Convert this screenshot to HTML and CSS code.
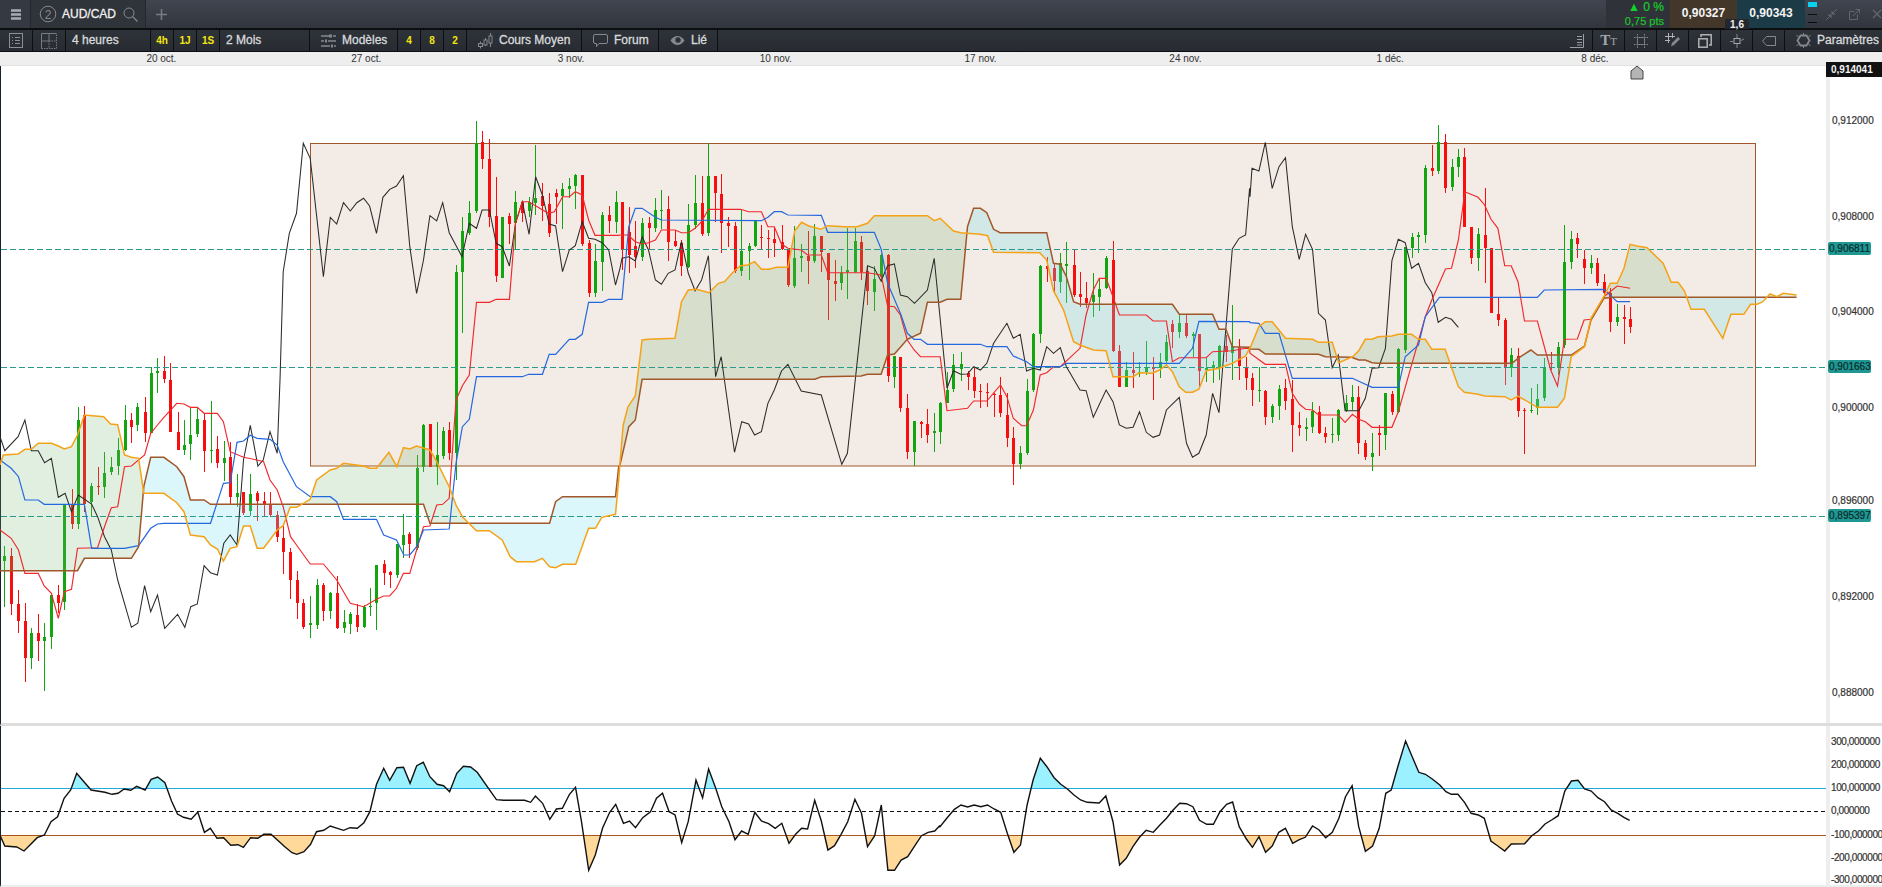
FILE: index.html
```html
<!DOCTYPE html>
<html lang="fr">
<head>
  <meta charset="UTF-8" />
  <title>AUD/CAD</title>
  <link rel="stylesheet" href="styles.css">
</head>
<body>

  <!-- barre du haut -->
  <div class="topbar">
    <div class="menu-cell">
      <svg width="31" height="29" viewBox="0 0 31 29"><path d="M11 10.500h10M11 14.500h10M11 18.500h10" stroke="#a8abb0" stroke-width="2.400"/></svg>
    </div>
    <div class="tab">
      <svg width="18" height="18" viewBox="0 0 18 18"><circle cx="9" cy="9" r="7.800" fill="none" stroke="#85888e"/><text x="9" y="13.500" class="tab-num">2</text></svg>
      <span class="tab-name">AUD/CAD</span>
      <svg width="15" height="15" viewBox="0 0 15 15"><circle cx="6" cy="6" r="5" fill="none" stroke="#85888e"/><path d="M9.500 9.500l5 5" stroke="#85888e" stroke-width="1.300"/></svg>
    </div>
    <div class="plus">
      <svg width="11" height="11" viewBox="0 0 11 11"><path d="M5.500 0v11M0 5.500h11" stroke="#777b82" stroke-width="1.600"/></svg>
    </div>
    <div class="spacer"></div>
    <div class="quote">
      <span class="pct">▲ 0 %</span>
      <span class="pts">0,75 pts</span>
    </div>
    <div class="price bid">0,90327</div>
    <div class="price ask">0,90343</div>
    <div class="depth"><i class="d1"></i><i></i><i></i></div>
    <div class="win-btns">
      <svg width="11" height="11" viewBox="0 0 11 11"><path d="M0 11l3.500-3.500M11 0L7.500 3.500" stroke="#63666c"/><path d="M1.500 5.500h4v4zM9.500 5.500h-4v-4z" fill="#63666c"/></svg>
      <svg width="11" height="11" viewBox="0 0 11 11"><path d="M8.500 5.500v5h-8v-8h5M4 7l6-6M6.500.5h4v4" fill="none" stroke="#63666c"/></svg>
      <svg width="10" height="10" viewBox="0 0 10 10"><path d="M1 1l8 8M9 1L1 9" stroke="#63666c" stroke-width="1.200"/></svg>
    </div>
    <div class="spread">1,6</div>
  </div>

  <!-- barre d'outils -->
  <div class="toolbar">
    <div class="tool w33">
      <svg width="14" height="15" viewBox="0 0 14 15"><rect x=".5" y=".5" width="13" height="14" fill="none" stroke="#8b8e94"/><path d="M3 4.500h1M6 4.500h5M3 7.500h1M6 7.500h5M3 10.500h1M6 10.500h5" stroke="#8b8e94"/></svg>
    </div>
    <div class="tool w33">
      <svg width="16" height="16" viewBox="0 0 16 16"><path d="M.5 15.500h15V.5M8 8v7.500M8 8h7.500" fill="none" stroke="#777a80" stroke-dasharray="1.500 1"/><path d="M.5.5h15M.5.5v15M8 .5V8H.5" fill="none" stroke="#777a80"/></svg>
    </div>
    <div class="tool w85 text-left">4 heures</div>
    <div class="tool w23 hot">4h</div>
    <div class="tool w23 hot">1J</div>
    <div class="tool w23 hot">1S</div>
    <div class="tool w90 text-left">2 Mois</div>
    <div class="tool w88 icon-left">
      <svg width="15" height="14" viewBox="0 0 15 14"><path d="M0 2h8M12 2h3M0 7h3M7 7h8M0 12h9M13 12h2" stroke="#85888e" stroke-width="1.400"/><path d="M8 .5h3v3H8zM4 5.500h2v3H4zM10 10.500h2v3h-2z" fill="#85888e"/></svg>
      Modèles
    </div>
    <div class="tool w23 hot">4</div>
    <div class="tool w23 hot">8</div>
    <div class="tool w23 hot">2</div>
    <div class="tool w115 icon-left gap5">
      <svg width="16" height="16" viewBox="0 0 16 16"><path d="M2.500 8.500v7M7.500 5v8M12.500 0v14" stroke="#85888e"/><rect x=".5" y="10.500" width="4" height="3" fill="#2b2f36" stroke="#85888e"/><rect x="6" y="7" width="3" height="5" fill="#2b2f36" stroke="#85888e"/><rect x="11" y="3" width="3" height="7" fill="#2b2f36" stroke="#85888e"/></svg>
      Cours Moyen
    </div>
    <div class="tool w77 icon-left">
      <svg width="15" height="14" viewBox="0 0 15 14"><path d="M2 .5h11q1.500 0 1.500 1.500v6q0 1.500-1.500 1.500H6l-2.500 3v-3H2Q.5 9.500.5 8V2Q.5.5 2 .5z" fill="none" stroke="#85888e"/></svg>
      Forum
    </div>
    <div class="tool w59 icon-left">
      <svg width="15" height="11" viewBox="0 0 15 11"><path d="M.5 5.500C3 2 5 1 7.500 1S12 2 14.500 5.500C12 9 10 10 7.500 10S3 9 .5 5.500z" fill="#85888e"/><circle cx="8" cy="5" r="2.700" fill="#2b2f36"/></svg>
      Lié
    </div>
    <div class="spacer"></div>
    <div class="tool w32">
      <svg width="14" height="14" viewBox="0 0 14 14"><path d="M13.500 0v13.500H0M7 2.500h5M7 5.500h5M7 8.500h5M7 11h5" fill="none" stroke="#9b9ea3"/></svg>
    </div>
    <div class="tool w32 tt"><span class="tt-big">T</span><span class="tt-small">T</span></div>
    <div class="tool w32">
      <svg width="14" height="14" viewBox="0 0 14 14"><path d="M3.500 0v14M10.500 0v14M0 3.500h14M0 10.500h14" stroke="#85888e" stroke-dasharray="1.500 1"/><path d="M3.500 3.500h7v7h-7z" fill="none" stroke="#85888e" stroke-width=".7"/></svg>
    </div>
    <div class="tool w32">
      <svg width="15" height="15" viewBox="0 0 15 15"><path d="M3.500 0v10M7.500 0v5M0 3.500h10M0 7.500h5" stroke="#b0b2b6"/><path d="M6 13.500l1-3.500 6-6 2 2-6 6z" fill="#85888e"/></svg>
    </div>
    <div class="tool w32">
      <svg width="14" height="14" viewBox="0 0 14 14"><path d="M3 3V.8h10.200V11H11" fill="none" stroke="#b0b2b6" stroke-width="1.500"/><rect x=".8" y="4.800" width="8.400" height="8.400" fill="none" stroke="#b0b2b6" stroke-width="1.500"/></svg>
    </div>
    <div class="tool w32">
      <svg width="14" height="14" viewBox="0 0 14 14"><path d="M7 0v14M0 7.500h3M11 6.500l3-1.500" stroke="#85888e"/><rect x="4" y="4.500" width="6" height="5" fill="#2b2f36" stroke="#a5a8ac"/></svg>
    </div>
    <div class="tool w32">
      <svg width="14" height="10" viewBox="0 0 14 10"><path d="M4.500.5h9v9h-9L.5 5z" fill="none" stroke="#85888e"/></svg>
    </div>
    <div class="tool w97 icon-left params">
      <svg width="15" height="15" viewBox="0 0 15 15"><path d="M4.500 2.500h6l3 5-3 5h-6l-3-5z" fill="none" stroke="#85888e" stroke-width="1.800"/><path d="M7.500 0v2M7.500 13v2M.5 2.500l2 1M14.500 2.500l-2 1M.5 12.500l2-1M14.500 12.500l-2-1" stroke="#85888e"/></svg>
      Paramètres
    </div>
  </div>

  <!-- axe du temps -->
  <div class="datebar">
    <span>20 oct.</span><span>27 oct.</span><span>3 nov.</span><span>10 nov.</span>
    <span>17 nov.</span><span>24 nov.</span><span>1 déc.</span><span>8 déc.</span>
  </div>

  <!-- graphique principal -->
  <div class="pane pane-main">
    <svg class="plot" id="mainPlot" width="1825" height="657" viewBox="1 66 1825 657"></svg>
    <div class="scale" id="mainScale"></div>
  </div>

  <!-- CCI -->
  <div class="pane pane-osc">
    <svg class="plot" id="oscPlot" width="1825" height="159" viewBox="1 726 1825 159"></svg>
    <div class="scale scale-osc" id="oscScale"></div>
  </div>

  <script src="chart.js"></script>
</body>
</html>
```

FILE: styles.css
```css
* {
  box-sizing: border-box;
}
html, body {
  margin: 0;
  height: 100%;
  overflow: hidden;
}
body {
  font-family: "Liberation Sans", Arial, sans-serif;
  background-color: #FFFFFF;
  color: #333;
}
.spacer {
  flex: 1;
}

/* barre du haut */
.topbar {
  position: relative;
  display: flex;
  height: 30px;
  background: linear-gradient(#41454f, #31353d);
  border-bottom: 2px solid #0d0e10;
}
.menu-cell {
  width: 31px;
  background-color: #353941;
  border-right: 1px solid #24262b;
}
.tab {
  display: flex;
  align-items: center;
  width: 115px;
  padding-left: 8px;
  background-color: #2f333a;
  border-right: 1px solid #24262b;
}
.tab-num {
  font-size: 12px;
  fill: #85888e;
  text-anchor: middle;
}
.tab-name {
  margin: 0 7px 0 5px;
  font-size: 12px;
  color: #f0f0f0;
  -webkit-text-stroke: 0.3px #f0f0f0;
}
.plus {
  display: flex;
  align-items: center;
  margin-left: 10px;
}
.quote {
  display: flex;
  flex-direction: column;
  align-items: flex-end;
  justify-content: center;
  width: 64px;
  padding-right: 6px;
  background-color: #2f3238;
  font-size: 12px;
  line-height: 14px;
}
.pct {
  color: #14d02a;
  -webkit-text-stroke: 0.2px #14d02a;
}
.pts {
  color: #1cc52c;
  font-size: 11px;
  -webkit-text-stroke: 0.2px #1cc52c;
}
.price {
  width: 67px;
  font-size: 12px;
  font-weight: bold;
  line-height: 27px;
  text-align: center;
  color: #f4f4f4;
}
.bid {
  background-color: #43372a;
}
.ask {
  width: 68px;
  background-color: #1b3b46;
}
.depth {
  width: 15px;
  padding: 2px 3px 0 3px;
}
.depth i {
  display: block;
  height: 1px;
  margin-bottom: 7px;
  background-color: #0c0c0c;
}
.depth i.d1 {
  height: 5px;
  margin-bottom: 7px;
  background-color: #08d0f0;
}
.win-btns {
  display: flex;
  align-items: center;
  gap: 12px;
  width: 62px;
  padding-left: 6px;
}
.spread {
  position: absolute;
  top: 19px;
  left: 1725px;
  width: 24px;
  height: 10px;
  background-color: #23262c;
  border-radius: 2px 2px 0 0;
  color: #eee;
  font-size: 10px;
  line-height: 11px;
  font-weight: bold;
  text-align: center;
}

/* barre d'outils */
.toolbar {
  display: flex;
  height: 22px;
  background: linear-gradient(#2e3239, #282c32);
  border-bottom: 1px solid #0d0e10;
  color: #d8dadc;
  font-size: 12px;
  -webkit-text-stroke: 0.3px #d8dadc;
}
.tool {
  display: flex;
  align-items: center;
  justify-content: center;
  flex: none;
  border-right: 1px solid #0d0e10;
  line-height: 21px;
}
.w23 { width: 23px; }
.w32 { width: 32px; }
.w33 { width: 33px; }
.w59 { width: 59px; }
.w77 { width: 77px; }
.w85 { width: 85px; }
.w88 { width: 88px; }
.w90 { width: 90px; }
.w97 { width: 97px; border-right: none; }
.w115 { width: 115px; }
.text-left {
  justify-content: flex-start;
  padding-left: 6px;
}
.icon-left {
  justify-content: flex-start;
  gap: 6px;
  padding-left: 11px;
}
.gap5 {
  gap: 5px;
}
.hot {
  color: #f5e60c;
  font-size: 10px;
  font-weight: bold;
  -webkit-text-stroke: 0;
}
.tt {
  font-family: "Liberation Serif", serif;
  font-weight: bold;
  color: #a5a8ac;
  align-items: baseline;
  -webkit-text-stroke: 0;
}
.tt-big { font-size: 15px; }
.tt-small { font-size: 11px; font-weight: normal; }
.params {
  padding-left: 11px;
  gap: 6px;
}

/* axe du temps */
.datebar {
  display: flex;
  height: 14px;
  padding-left: 59px;
  background-color: #eeeeee;
  border-bottom: 1px solid #e2e2e2;
  font-size: 10px;
  line-height: 14px;
  color: #333;
}
.datebar span {
  flex: none;
  width: 204.800px;
  text-align: center;
}

/* panneaux */
.pane {
  display: flex;
  border-left: 1px solid #15202e;
  box-sizing: content-box;
}
.pane-main {
  height: 657px;
  border-bottom: 3px solid #dddddd;
}
.pane-osc {
  height: 159px;
  border-bottom: 2px solid #eeeeee;
}
.plot {
  display: block;
  flex: none;
  overflow: visible;
}
.up {
  fill: #12a50f;
}
.down {
  fill: #f80e0e;
}
.scale {
  position: relative;
  flex: 1;
  border-left: 4px solid #eeeeee;
  background-color: #FFFFFF;
  font-size: 10px;
  color: #333;
  -webkit-text-stroke: 0.2px #333;
}
.scale span {
  position: absolute;
  left: 2px;
  line-height: 12px;
  white-space: nowrap;
}
.scale-osc {
  overflow: hidden;
}
.scale-osc span {
  left: 1px;
  letter-spacing: -0.4px;
}
.scale .tag {
  left: -2px;
  width: 43px;
  height: 13px;
  padding-left: 1px;
  background-color: #1f9792;
  border-radius: 2px;
  color: #0b2b2b;
  line-height: 13px;
  -webkit-text-stroke: 0.2px #0b2b2b;
}
.scale .last {
  left: -4px;
  right: 0;
  height: 15px;
  padding-left: 5px;
  background-color: #111111;
  color: #f4f4f4;
  font-weight: bold;
  line-height: 15px;
  -webkit-text-stroke: 0;
}
```

FILE: chart.js
```js
// coordonnées relevées sur les crops -> pixels de la page
function conv(pts, xo, yo, sx) {
  const out = [];
  for (let i = 0; i < pts.length; i += 2) {
    out.push([xo + pts[i] / sx, yo + pts[i + 1] / 3]);
  }
  return out;
}
const z4 = pts => conv(pts, 0, 380, 2.489);
const z3 = pts => conv(pts, 0, 100, 2.489);
const z5 = pts => conv(pts, 620, 100, 2.489);
const z6 = pts => conv(pts, 1250, 100, 2.481);
const z7 = pts => conv(pts, 0, 715, 1.668);
const z8 = pts => conv(pts, 940, 715, 1.6645);

// bougies : x, haut, bas, corps haut, corps bas, couleur (1 vert, 0 rouge)
const candles4 = [
  11,497,680,528,543,1, 28,505,705,528,672,0, 46,630,758,672,722,0, 61,670,905,722,833,0, 78,745,866,760,833,1,
  95,702,843,760,782,0, 110,728,932,771,782,1, 128,645,808,645,770,1, 145,615,700,645,668,0, 160,375,690,375,665,1,
  178,328,447,375,432,0, 193,82,447,120,432,1, 210,78,395,105,372,0, 227,308,407,318,365,1, 243,262,345,318,322,0,
  260,215,355,280,320,1, 277,232,285,260,275,1, 293,175,285,210,258,1, 310,75,212,120,210,1, 327,100,190,120,140,0,
  342,68,152,82,135,1, 360,52,185,96,160,0, 375,-38,158,-20,158,1, 392,-65,38,-27,-22,1, 408,-72,8,-27,-2,0,
  424,-50,155,0,155,0, 442,95,210,155,210,0, 458,120,225,195,210,1, 474,85,240,165,192,1, 491,82,172,118,162,1,
  508,100,275,120,212,0, 524,62,248,210,213,1, 541,168,263,208,250,0, 557,183,303,235,248,1, 573,185,375,232,350,0,
  590,282,380,340,350,1, 606,335,405,335,398,0, 623,282,407,342,392,1, 640,332,422,340,362,0, 656,335,412,364,372,0,
  672,336,412,372,405,0, 690,392,485,405,470,0, 705,432,582,473,516,0, 723,505,657,516,600,0, 738,573,718,600,668,0,
  755,658,748,668,740,0, 772,648,773,730,735,1, 788,598,748,615,735,1, 805,608,722,615,692,0, 822,635,718,640,692,1,
  838,588,748,638,745,0, 855,690,758,726,745,1, 872,695,762,703,732,1, 888,672,757,705,740,0, 905,675,745,680,740,1,
  920,625,708,677,680,1, 937,555,750,555,670,1, 955,540,615,552,578,0, 970,573,623,576,585,0, 987,492,593,492,585,1,
  1004,403,533,465,495,1, 1019,457,533,462,493,0, 1037,225,510,265,505,1, 1054,133,275,135,262,1, 1070,132,262,132,262,0,
  1087,127,315,225,260,1, 1102,140,237,153,228,1, 1118,127,240,150,220,0, 1136,-345,300,-323,218,1, 1151,-490,-140,-447,-325,1,
  1168,-537,-435,-500,-440,1, 1186,-777,-500,-710,-508,1, 1200,-747,-633,-713,-663,0, 1218,-723,-460,-663,-490,0,
  1235,-608,-295,-492,-312,0, 1250,-490,-307,-490,-307,1, 1268,-500,-408,-492,-468,0, 1283,-567,-390,-534,-472,1,
  1300,-535,-475,-535,-502,0, 1316,-550,-490,-535,-508,1, 1332,-705,-495,-545,-530,1, 1350,-590,-478,-552,-522,0,
  1367,-562,-430,-528,-442,0, 1383,-572,-468,-560,-550,0, 1400,-590,-454,-572,-552,1, 1417,-605,-545,-582,-572,1,
  1432,-618,-514,-615,-582,1, 1449,-615,-403,-615,-408,0, 1465,-420,-250,-410,-260,0, 1481,-408,-248,-357,-260,1,
  1499,-505,-267,-495,-355,1, 1515,-522,-440,-495,-478,0, 1532,-567,-440,-533,-475,1
];
const candles5 = [
  5,305,510,307,450,0, 22,322,520,396,465,0, 38,362,505,438,470,0, 55,353,483,368,470,1, 71,352,450,370,385,0,
  88,295,395,330,385,1, 103,270,388,330,333,1, 120,288,482,326,425,0, 137,390,440,422,438,0, 153,420,528,428,498,0,
  170,312,505,375,500,1, 187,225,388,308,375,1, 203,228,408,308,402,0, 220,130,408,228,400,1, 237,228,365,228,278,0,
  252,222,458,282,368,0, 269,350,440,369,377,0, 285,365,520,378,512,0, 302,330,527,452,512,1, 320,430,540,438,452,1,
  335,360,440,362,438,1, 352,375,450,411,413,0, 368,390,475,413,416,0, 384,380,470,418,428,0, 402,375,450,426,447,0,
  418,448,560,450,555,0, 434,378,563,475,557,1, 451,432,515,468,473,1, 467,392,552,468,482,0, 484,372,490,408,483,1,
  501,408,515,408,455,0, 517,458,660,460,540,0, 534,480,602,543,551,0, 550,497,570,520,548,1, 566,385,597,510,517,1,
  584,385,518,422,515,1, 600,408,540,426,517,0, 616,497,615,513,572,0, 633,497,632,538,575,1, 650,462,545,465,532,1,
  666,462,845,465,827,0, 683,768,865,768,830,1, 698,770,935,770,925,0, 715,882,1078,925,1055,0, 732,962,1097,963,1055,1,
  748,962,1015,966,972,0, 765,928,1028,972,1005,0, 782,938,1055,993,1000,1, 797,905,1032,910,995,1, 814,815,908,870,908,1,
  830,762,875,795,867,1, 848,757,842,793,808,1, 865,812,870,820,830,0, 880,802,895,832,872,0, 897,852,925,873,876,0,
  913,850,920,875,880,0, 930,880,950,883,886,0, 947,830,950,885,940,0, 963,880,1040,945,1013,0, 979,982,1155,1013,1092,0,
  996,1038,1108,1060,1092,1, 1012,838,1065,873,1060,1, 1029,700,875,702,870,1, 1046,495,728,497,702,1, 1062,470,545,497,507,0,
  1079,490,580,505,542,0, 1096,460,580,490,545,1, 1111,425,610,492,497,1, 1129,448,590,495,585,0, 1145,517,620,582,590,0,
  1160,545,625,595,608,0, 1178,520,650,585,605,1, 1193,535,632,568,590,1, 1210,468,568,475,565,1, 1227,423,755,480,752,0,
  1243,735,860,752,860,0, 1260,785,862,810,860,1, 1277,755,865,810,820,0, 1293,785,830,815,818,1, 1310,722,825,800,815,1,
  1327,770,900,802,808,0, 1343,758,835,785,805,1, 1360,705,795,725,782,1, 1375,660,745,672,695,0, 1392,645,715,670,697,1,
  1409,645,715,670,708,0, 1425,695,770,702,707,1, 1441,702,865,702,812,0, 1459,770,845,803,810,1, 1475,782,850,795,805,1,
  1491,735,840,738,800,1, 1508,705,785,738,755,0, 1524,615,840,738,758,1, 1541,718,840,742,798,0, 1557,770,870,800,833,0
];
const candles6 = [
  5,820,918,835,870,0, 22,802,905,870,873,1, 38,870,975,872,950,0, 55,912,970,917,950,1, 72,855,960,868,918,1,
  88,838,930,865,902,0, 105,840,1055,897,975,0, 122,935,1008,975,983,0, 138,955,1022,980,986,1, 155,905,998,932,980,1,
  170,918,1002,937,998,0, 187,982,1028,998,1010,0, 204,955,1028,1003,1005,1, 219,927,1022,930,1005,1, 237,885,935,910,932,1,
  254,855,930,890,905,1, 269,857,1062,892,1028,0, 286,1020,1080,1030,1072,0, 303,1000,1112,1060,1072,1, 319,975,1068,998,1004,0,
  336,880,1050,880,1005,1, 352,872,945,882,935,0, 368,745,940,747,937,1, 385,440,760,442,750,1, 401,398,475,410,445,1,
  418,395,460,405,410,1, 435,195,430,205,405,1, 451,135,228,205,213,0, 467,75,222,127,212,1, 485,102,278,127,263,0,
  500,178,272,202,260,1, 517,148,230,172,200,1, 532,145,382,172,380,0, 549,380,492,380,475,0, 566,385,512,402,475,1,
  582,265,548,406,443,0, 598,443,640,445,640,0, 615,590,677,643,660,0, 632,655,855,660,800,0, 648,745,830,765,805,1,
  665,745,950,767,932,0, 681,925,1062,930,933,0, 698,865,940,930,933,1, 713,852,945,898,925,1, 730,775,902,805,895,1,
  747,757,810,790,793,0, 763,727,825,742,803,1, 780,375,745,485,735,1, 797,393,507,418,485,1, 812,398,473,415,432,0,
  829,450,552,477,503,0, 846,465,522,490,505,1, 861,475,557,490,548,0, 878,522,595,547,580,0, 894,565,695,580,665,0,
  911,612,678,652,665,1, 928,615,732,652,657,0, 943,622,698,658,680,0
];

// Ichimoku
const senkouA = [].concat(
  z4([0,255,8,225,45,222,62,208,78,208,95,190,128,190,145,198,160,207,178,200,193,165,210,105,258,110,275,132,293,134,310,225,327,232,345,235,358,340,408,340,440,368,458,395,474,465,508,470,524,495,541,507,556,543,573,505,590,500,606,438,623,438,640,505,656,505,690,450,705,437,722,382,738,382,772,358,788,300,822,270,838,265,855,250,905,258,920,265,937,265,968,217,988,260,1004,203,1020,207,1037,198,1070,210,1087,245,1118,320,1135,375,1152,412,1186,452,1218,452,1250,480,1270,530,1285,545,1330,545,1350,535,1368,560,1383,563,1400,553,1433,553,1465,445,1482,445,1498,412,1532,403,1540,300]),
  z5([0,1090,8,975,20,920,38,888,55,720,70,718,137,715,153,605,170,570,190,568,222,578,245,550,260,545,280,518,300,497,318,495,335,485,352,508,370,508,390,502,418,502,435,392,452,367,470,378,500,388,517,377,560,380,590,380,616,370,633,347,765,347,782,362,797,355,830,393,848,398,897,403,915,407,930,457,1045,458,1062,480,1079,572,1104,630,1129,725,1145,735,1178,750,1210,752,1227,830,1277,830,1293,818,1325,820,1343,810,1360,795,1375,815,1392,860,1408,877,1425,877,1441,868,1459,812,1491,805,1524,790,1557,768,1567,745]),
  z6([0,745,22,680,38,665,55,665,88,715,155,718,170,727,204,727,220,788,255,770,270,752,286,718,303,718,318,710,352,708,368,703,401,703,418,718,435,718,451,748,484,748,517,860,532,877,566,883,582,888,632,890,648,900,665,888,713,922,763,922,780,895,797,770,830,740,846,655,878,590,894,550,911,550,928,505,943,433,960,438,985,443,1025,490,1045,547,1062,547,1078,573,1094,628,1127,628,1173,715,1193,643,1225,643,1242,613,1258,613,1272,605,1290,582,1307,590,1323,580,1356,585])
);
const senkouB = [].concat(
  z4([0,572,193,572,210,535,327,535,345,500,358,320,375,232,408,232,440,260,458,290,474,360,508,360,524,373,1054,373,1070,430,1368,430,1383,365,1400,350,1532,350,1540,260]),
  z5([0,1095,22,980,38,960,55,838,485,838,501,830,600,828,616,823,650,823,666,765,683,762,715,718,748,700,765,607,797,607,814,598,848,598,865,380,880,325,897,325,913,338,930,388,946,398,1062,398,1079,490,1096,493,1111,530,1129,605,1145,613,1375,613,1392,643,1475,643,1491,688,1508,688,1524,740,1567,742]),
  z6([0,747,22,748,38,762,170,763,187,770,252,772,270,780,286,780,303,788,318,790,650,790,665,775,697,750,713,765,797,765,830,738,846,660,878,595,900,592,1356,592])
);
const tenkan = [].concat(
  z4([0,450,28,475,46,510,62,580,95,580,110,618,128,640,145,715,160,635,178,628,193,505,243,503,260,440,277,383,293,380,310,260,327,258,360,225,375,160,392,135,408,112,440,70,458,72,474,82,491,82,508,100,541,100,556,125,573,215,606,232,640,240,656,245,672,300,690,330,705,380,723,470,738,495,772,552,805,552,838,600,872,670,905,680,937,658,955,648,970,648,987,625,1004,580,1020,580,1037,510,1054,440,1070,438,1087,375,1102,373,1118,355]),
  z3([1135,900,1152,855,1168,825,1186,607,1218,607,1235,598,1268,598,1283,370,1300,305,1316,305,1365,340,1380,335,1400,290,1417,290,1432,275,1449,285,1465,360,1481,406,1540,406]),
  z5([0,405,20,405,38,425,55,432,71,428,88,420,103,390,137,390,153,398,170,398,187,385,203,365,220,328,300,328,320,335,352,335,368,380,384,380,402,432,418,445,451,450,467,465,501,465,517,518,616,518,650,525,666,618,683,620,698,645,715,720,732,750,748,770,797,770,814,932,865,925,880,903,913,903,947,855,963,890,979,955,1000,977,1012,977,1029,930,1046,825,1062,818,1079,800,1096,800,1145,745,1160,645,1178,570,1193,535,1210,535,1227,590,1243,645,1310,645,1327,663,1360,663,1375,785,1392,773,1459,773,1475,755,1524,752,1557,745,1567,745]),
  z6([0,760,38,793,88,793,105,880,122,912,138,928,155,930,170,945,219,945,236,967,254,943,270,958,286,965,303,982,352,982,368,935,435,650,451,600,485,507,500,505,517,420,533,275,566,292,582,315,598,358,615,385,632,497,648,497,665,545,681,663,713,663,746,810,763,858,780,718,812,717,829,660,846,658,878,590,911,558,943,565])
);
const kijun = [].concat(
  z4([0,240,28,265,46,290,62,360,95,360,110,373,210,373,228,505,310,505,345,497,375,445,392,432,408,430,524,430,556,310,573,308,590,187,606,183,623,166,640,175,672,178,690,195,705,245,738,320,772,350,822,350,838,365,855,418,937,418,955,465,987,480,1005,525,1020,525,1037,500,1054,450,1118,447,1135,250,1151,140,1168,118]),
  z3([1186,830,1300,830,1316,823,1350,823,1367,763,1383,763,1417,718,1432,718,1449,703,1465,607,1499,607,1515,598,1540,598]),
  z5([0,598,5,598,22,380,38,325,55,325,88,352,103,360,352,362,368,352,384,335,402,335,418,345,501,346,517,397,633,397,650,447,666,550,698,640,715,700,732,718,748,718,765,733,897,733,913,740,963,740,979,768,1012,785,1029,800,1096,800,1111,790,1392,790,1425,745,1441,664,1567,665]),
  z6([0,668,22,670,38,700,72,700,105,835,254,835,303,862,368,862,385,770,418,735,435,650,470,592,713,592,730,570,878,568,911,605,943,605])
);
const chikou = [].concat(
  z4([0,170,12,212,45,170,62,120,78,212,95,212,111,248,128,235,145,352,162,340,178,395,195,345,228,372,243,410,260,470,277,510,293,600,327,742,343,730,360,617,375,695,392,645,410,745,442,703,460,742,475,680,491,672,508,557,524,578,541,585,557,490,573,465,590,495,606,240,623,136,642,258,655,240,672,155,690,220,697,0]),
  z3([705,515,720,400,738,340,755,130,772,175,805,530,822,352,838,372,855,308,872,333,888,308,905,295,920,318,937,400,953,292,970,268,987,258,1004,227,1020,440,1037,580,1054,480,1070,347,1087,363,1102,308,1118,398,1150,470,1168,370,1186,385,1200,330,1218,330,1235,430,1250,440,1268,498,1283,370,1300,305,1317,403,1333,230,1350,285,1367,372,1383,378,1400,515,1417,450,1432,437,1449,365,1465,415,1481,418,1499,428,1515,450,1532,555]),
  z5([0,505,5,475,22,470,38,483,55,410,71,450,88,540,103,553,120,520,137,510,153,425,170,520,187,572,203,540,220,467,238,830,252,770,285,1057,303,965,320,972,335,1005,352,995,368,910,384,870,402,813,418,793,451,873,501,885,552,1093,566,1060,616,497,633,505,650,543,666,497,683,492,698,585,715,590,733,610,765,570,782,475,814,865,830,812,848,823,865,822,880,800,897,810,913,790,930,730,963,670,979,715,996,703,1012,813,1029,805,1046,810,1062,740,1079,760,1096,743,1111,800,1145,870,1160,872,1178,952,1210,870,1227,905,1243,975,1260,985,1277,982,1293,935,1310,997,1327,1012,1343,1005,1360,930,1392,892,1410,1030,1425,1072,1441,1060,1459,1005,1475,880,1491,938,1524,447,1541,415,1557,405,1567,265]),
  z6([0,290,5,205,22,213,38,127,55,265,72,200,88,173,105,380,122,478,138,403,155,448,170,640,187,660,204,803,219,765,236,932,270,932,286,895,303,805,319,803,336,745,352,482,368,418,385,428,401,505,418,490,435,548,451,578,467,667,485,652,500,658,517,682])
);

// CCI
const cci = [].concat(
  z7([0,361,8,393,28,396,40,408,50,390,62,368,74,360,85,320,96,305,107,250,118,225,128,175,140,200,152,225,175,232,187,238,197,235,207,222,218,226,228,214,242,225,252,193,263,186,275,203,286,258,296,297,306,307,319,313,330,291,341,352,351,340,362,370,373,368,385,391,397,389,406,397,418,368,430,370,440,358,452,358,475,395,487,413,495,418,507,410,518,388,528,350,540,346,551,333,573,346,584,338,596,340,607,323,617,290,628,208,640,160,650,196,662,158,673,157,684,205,695,152,706,142,717,185,729,208,740,212,750,230,762,175,773,154,785,156,796,172,828,254,840,256,875,256,885,262,893,243,905,265,917,313,928,282,938,280,950,238,960,217,970,320,982,466,993,420,1005,340,1017,292,1027,268,1040,325,1050,318,1060,338,1072,308,1085,290,1095,250,1105,235,1116,290,1126,300,1137,383,1148,320,1161,195,1172,248,1182,162,1193,215,1204,275,1216,320,1226,374,1237,348,1248,358,1259,292,1270,318,1282,326,1293,340,1304,325,1316,385,1327,358,1337,340,1347,342,1359,256,1370,318,1381,405,1392,392,1403,358,1414,320,1426,253,1437,295,1447,395,1459,362,1470,270,1481,466,1492,466,1503,435,1514,425,1526,392,1537,362,1548,352,1559,348,1567,333]),
  z8([0,335,12,308,24,283,35,270,46,276,57,270,68,275,79,270,90,282,101,292,112,355,123,412,134,390,145,270,155,195,167,130,178,155,190,188,201,208,212,222,223,240,234,255,245,262,265,264,276,243,288,320,299,450,310,430,321,395,332,367,343,346,355,352,366,330,377,310,388,285,399,265,410,266,421,275,432,316,444,328,455,328,466,290,477,268,487,261,498,335,510,372,520,397,531,365,542,412,553,393,564,352,575,340,587,385,598,374,608,367,620,333,631,345,642,368,653,352,664,310,675,245,686,212,697,335,708,409,720,393,731,340,742,235,751,225,762,155,775,78,786,125,797,172,808,178,820,193,832,210,842,230,851,238,862,238,873,262,884,295,896,300,906,310,917,378,928,392,940,408,951,387,973,386,985,362,996,348,1007,327,1018,315,1029,302,1040,228,1051,198,1062,196,1073,222,1084,228,1095,248,1106,260,1117,285,1128,295,1139,308,1148,316])
);

function yAt(line, x) {
  for (let i = 1; i < line.length; i++) {
    if (x <= line[i][0]) {
      const [x0, y0] = line[i - 1];
      const [x1, y1] = line[i];
      return x1 === x0 ? y1 : y0 + (y1 - y0) * (x - x0) / (x1 - x0);
    }
  }
  return line[line.length - 1][1];
}

// polygones entre deux courbes, un par zone où la courbe a est au-dessus (sign -1) ou en-dessous (sign 1)
function between(a, b, sign, x0, x1) {
  let d = '';
  let top = [];
  let bot = [];
  const flush = () => {
    if (top.length > 1) {
      const pts = top.concat(bot.reverse());
      d += 'M' + pts.map(p => p[0] + ' ' + p[1].toFixed(1)).join('L') + 'Z';
    }
    top = [];
    bot = [];
  };
  for (let x = x0; x <= x1; x += 0.5) {
    const ya = yAt(a, x);
    const yb = yAt(b, x);
    if ((ya - yb) * sign > 0) {
      top.push([x, ya]);
      bot.push([x, yb]);
    } else {
      flush();
    }
  }
  flush();
  return d;
}

const toPoints = line => line.map(p => p[0].toFixed(1) + ',' + p[1].toFixed(1)).join(' ');

function candleRects(data, conv1) {
  let s = '';
  for (let i = 0; i < data.length; i += 6) {
    const pts = conv1([data[i], data[i + 1], data[i], data[i + 2], data[i], data[i + 3], data[i], data[i + 4]]);
    const x = Math.round(pts[0][0]);
    const cls = data[i + 5] ? 'up' : 'down';
    const body = Math.max(pts[3][1] - pts[2][1], 1);
    s += `<rect class="${cls}" x="${x}" y="${pts[0][1].toFixed(1)}" width="1" height="${(pts[1][1] - pts[0][1]).toFixed(1)}"/>`;
    s += `<rect class="${cls}" x="${x - 1}" y="${pts[2][1].toFixed(1)}" width="3" height="${body.toFixed(1)}"/>`;
  }
  return s;
}

let main = '';
main += '<rect x="310.5" y="143.5" width="1445" height="322.5" fill="#f3ebe5" stroke="#a0582a"/>';
main += '<g shape-rendering="crispEdges">';
main += candleRects(candles4, z4) + candleRects(candles5, z5) + candleRects(candles6, z6);
main += '</g>';
main += `<path d="${between(senkouA, senkouB, -1, 0, 1796)}" fill="rgba(120,180,120,.22)"/>`;
main += `<path d="${between(senkouA, senkouB, 1, 0, 1796)}" fill="rgba(110,225,240,.25)"/>`;
[249.5, 367.5, 516.5].forEach(y => {
  main += `<line x1="1" x2="1826" y1="${y}" y2="${y}" stroke="#2a9a8c" stroke-dasharray="6 3"/>`;
});
main += `<polyline points="${toPoints(chikou)}" fill="none" stroke="#2b2b2b" stroke-width="1.05"/>`;
main += `<polyline points="${toPoints(tenkan)}" fill="none" stroke="#f0282c" stroke-width="1.15"/>`;
main += `<polyline points="${toPoints(kijun)}" fill="none" stroke="#2468e0" stroke-width="1.2"/>`;
main += `<polyline points="${toPoints(senkouB)}" fill="none" stroke="#a0582a" stroke-width="1.5"/>`;
main += `<polyline points="${toPoints(senkouA)}" fill="none" stroke="#f5a216" stroke-width="1.5"/>`;
main += '<path d="M1637 66l6 5v8h-12v-8z" fill="#b4b4b4" stroke="#444"/>';
document.getElementById('mainPlot').innerHTML = main;

const levelUp = [[0, 788.5], [1826, 788.5]];
const levelDown = [[0, 835.5], [1826, 835.5]];
let osc = '';
osc += `<path d="${between(cci, levelUp, -1, 0, 1630)}" fill="#9bf1ff"/>`;
osc += `<path d="${between(cci, levelDown, 1, 0, 1630)}" fill="#ffd99a"/>`;
osc += '<line x1="1" x2="1826" y1="788.5" y2="788.5" stroke="#1fa8dc" stroke-width="1.2"/>';
osc += '<line x1="1" x2="1826" y1="811.5" y2="811.5" stroke="#111" stroke-dasharray="4 3"/>';
osc += '<line x1="1" x2="1826" y1="835.5" y2="835.5" stroke="#a8551c" stroke-width="1.2"/>';
osc += `<polyline points="${toPoints(cci)}" fill="none" stroke="#111" stroke-width="1.4"/>`;
document.getElementById('oscPlot').innerHTML = osc;

// échelles de prix
function addLabels(id, top, labels) {
  const box = document.getElementById(id);
  labels.forEach(([text, y, cls]) => {
    const el = document.createElement('span');
    el.textContent = text;
    if (cls) el.className = cls;
    el.style.top = (y - top) + 'px';
    box.appendChild(el);
  });
}
addLabels('mainScale', 66, [
  ['0,914041', 62, 'last'],
  ['0,912000', 115], ['0,908000', 211], ['0,904000', 306], ['0,900000', 402],
  ['0,896000', 495], ['0,892000', 591], ['0,888000', 687],
  ['0,906811', 242, 'tag'], ['0,901663', 360, 'tag'], ['0,895397', 509, 'tag']
]);
addLabels('oscScale', 726, [
  ['300,000000', 736], ['200,000000', 759], ['100,000000', 782], ['0,000000', 805],
  ['-100,000000', 829], ['-200,000000', 852], ['-300,000000', 874]
]);
```
